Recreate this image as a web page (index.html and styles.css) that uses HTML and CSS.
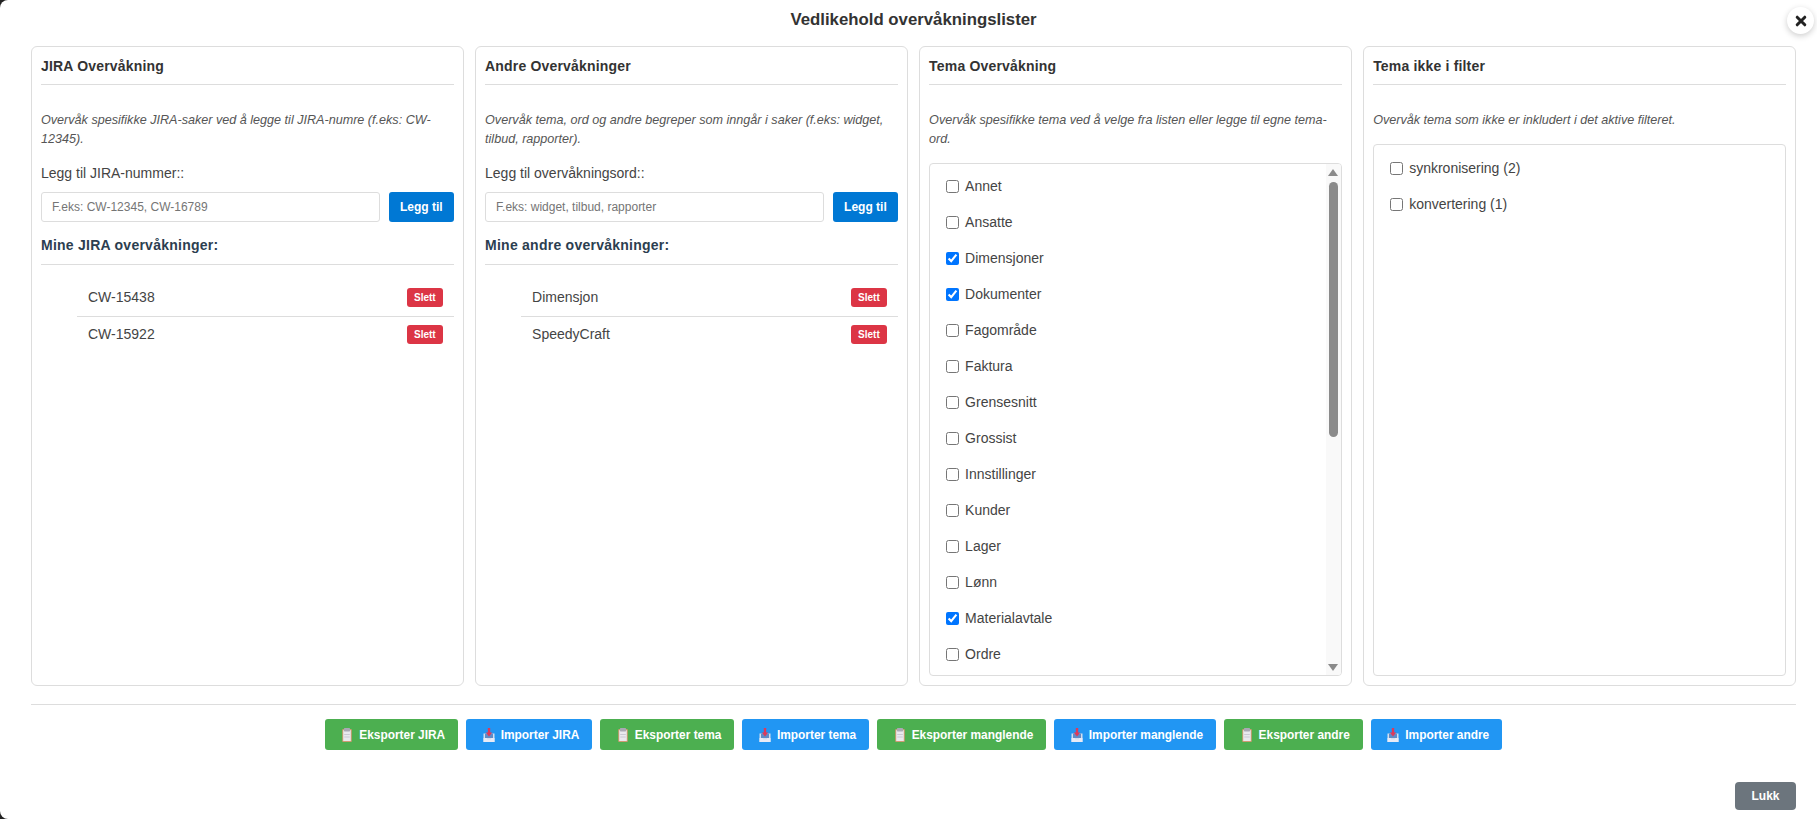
FILE: index.html
```html
<!DOCTYPE html>
<html lang="no">
<head>
<meta charset="utf-8">
<title>Vedlikehold overvåkningslister</title>
<link rel="stylesheet" href="styles.css">
</head>
<body>
<div class="dialog">
  <button class="close" aria-label="Lukk">
    <svg viewBox="0 0 14 14" width="14" height="14"><path d="M3.2 3.2 L10.8 10.8 M10.8 3.2 L3.2 10.8" stroke="#222" stroke-width="3" stroke-linecap="round" fill="none"/></svg>
  </button>
  <h1 class="title">Vedlikehold overvåkningslister</h1>
  <div class="panels">
    <section class="panel">
      <h2 class="panel-title">JIRA Overvåkning</h2>
      <p class="desc">Overvåk spesifikke JIRA-saker ved å legge til JIRA-numre (f.eks: CW-12345).</p>
      <label class="add-label">Legg til JIRA-nummer::</label>
      <div class="add-row">
        <input class="add-input" type="text" placeholder="F.eks: CW-12345, CW-16789">
        <button class="add-btn">Legg til</button>
      </div>
      <h3 class="sub-title">Mine JIRA overvåkninger:</h3>
      <ul class="watch-list">
        <li class="watch-row"><span>CW-15438</span><button class="del-btn">Slett</button></li>
        <li class="watch-row"><span>CW-15922</span><button class="del-btn">Slett</button></li>
      </ul>
    </section>
    <section class="panel">
      <h2 class="panel-title">Andre Overvåkninger</h2>
      <p class="desc">Overvåk tema, ord og andre begreper som inngår i saker (f.eks: widget, tilbud, rapporter).</p>
      <label class="add-label">Legg til overvåkningsord::</label>
      <div class="add-row">
        <input class="add-input" type="text" placeholder="F.eks: widget, tilbud, rapporter">
        <button class="add-btn">Legg til</button>
      </div>
      <h3 class="sub-title">Mine andre overvåkninger:</h3>
      <ul class="watch-list">
        <li class="watch-row"><span>Dimensjon</span><button class="del-btn">Slett</button></li>
        <li class="watch-row"><span>SpeedyCraft</span><button class="del-btn">Slett</button></li>
      </ul>
    </section>
    <section class="panel">
      <h2 class="panel-title">Tema Overvåkning</h2>
      <p class="desc">Overvåk spesifikke tema ved å velge fra listen eller legge til egne tema-ord.</p>
      <div class="check-box">
        <div class="check-list">
          <label class="check-row"><input type="checkbox">Annet</label>
          <label class="check-row"><input type="checkbox">Ansatte</label>
          <label class="check-row"><input type="checkbox" checked>Dimensjoner</label>
          <label class="check-row"><input type="checkbox" checked>Dokumenter</label>
          <label class="check-row"><input type="checkbox">Fagområde</label>
          <label class="check-row"><input type="checkbox">Faktura</label>
          <label class="check-row"><input type="checkbox">Grensesnitt</label>
          <label class="check-row"><input type="checkbox">Grossist</label>
          <label class="check-row"><input type="checkbox">Innstillinger</label>
          <label class="check-row"><input type="checkbox">Kunder</label>
          <label class="check-row"><input type="checkbox">Lager</label>
          <label class="check-row"><input type="checkbox">Lønn</label>
          <label class="check-row"><input type="checkbox" checked>Materialavtale</label>
          <label class="check-row"><input type="checkbox">Ordre</label>
        </div>
        <div class="scrollbar">
          <span class="arrow-up"></span>
          <span class="thumb"></span>
          <span class="arrow-down"></span>
        </div>
      </div>
    </section>
    <section class="panel">
      <h2 class="panel-title">Tema ikke i filter</h2>
      <p class="desc">Overvåk tema som ikke er inkludert i det aktive filteret.</p>
      <div class="check-box">
        <div class="check-list short">
          <label class="check-row"><input type="checkbox">synkronisering (2)</label>
          <label class="check-row"><input type="checkbox">konvertering (1)</label>
        </div>
      </div>
    </section>
  </div>
  <div class="io-bar">
    <button class="io-btn export"><svg class="ico" viewBox="0 0 14 16"><use href="#clip"/></svg>Eksporter JIRA</button>
    <button class="io-btn import"><svg class="ico" viewBox="0 0 14 16"><use href="#tray"/></svg>Importer JIRA</button>
    <button class="io-btn export"><svg class="ico" viewBox="0 0 14 16"><use href="#clip"/></svg>Eksporter tema</button>
    <button class="io-btn import"><svg class="ico" viewBox="0 0 14 16"><use href="#tray"/></svg>Importer tema</button>
    <button class="io-btn export"><svg class="ico" viewBox="0 0 14 16"><use href="#clip"/></svg>Eksporter manglende</button>
    <button class="io-btn import"><svg class="ico" viewBox="0 0 14 16"><use href="#tray"/></svg>Importer manglende</button>
    <button class="io-btn export"><svg class="ico" viewBox="0 0 14 16"><use href="#clip"/></svg>Eksporter andre</button>
    <button class="io-btn import"><svg class="ico" viewBox="0 0 14 16"><use href="#tray"/></svg>Importer andre</button>
  </div>
  <div class="foot"><button class="close-btn">Lukk</button></div>
</div>
<svg class="defs" width="0" height="0">
  <defs>
    <g id="clip">
      <rect x="2.2" y="2" width="9.6" height="13" rx="1" fill="#cf9a72"/>
      <rect x="3.2" y="3.2" width="7.6" height="10.8" fill="#e9e9ee"/>
      <rect x="4" y="1" width="6" height="3.4" rx=".6" fill="#a9a9b4"/>
      <rect x="4.2" y="7" width="5.6" height="1" fill="#cacad4"/>
      <rect x="4.2" y="9.5" width="5.6" height="1" fill="#cacad4"/>
    </g>
    <g id="tray">
      <path d="M1.5 6.5 H12.5 V15 H1.5 Z" fill="#d4deee"/>
      <path d="M3 6.5 H11 V11 H3 Z" fill="#5f8cc8"/>
      <path d="M1.5 11 H4.5 L5.5 12.5 H8.5 L9.5 11 H12.5 V15 H1.5 Z" fill="#e9ebf6"/>
      <path d="M5.8 1 H8.2 V5.5 H10.2 L7 9.6 L3.8 5.5 H5.8 Z" fill="#dc3a5a"/>
    </g>
  </defs>
</svg>
</body>
</html>
```

FILE: styles.css
```css
* { box-sizing: border-box; }
html, body { margin: 0; height: 100%; }
body {
  background: #222;
  font-family: "Liberation Sans", Arial, sans-serif;
  color: #333;
  overflow: hidden;
}
button { font-family: inherit; cursor: pointer; }
.defs { position: absolute; }
.dialog {
  position: relative;
  height: 819px;
  background: #fff;
  border-radius: 8px 0 0 8px;
  padding: 0 21px 9px 31px;
  display: flex;
  flex-direction: column;
}
.close {
  position: absolute;
  top: 7px;
  right: 3px;
  width: 27px;
  height: 27px;
  border: 0;
  padding: 0;
  border-radius: 50%;
  background: #fff;
  box-shadow: 0 2px 6px rgba(0, 0, 0, .2);
  display: flex;
  align-items: center;
  justify-content: center;
}
.title {
  margin: 0;
  height: 46px;
  padding-top: 10px;
  font-size: 16.8px;
  line-height: 20px;
  font-weight: 700;
  text-align: center;
  color: #333;
}
.panels {
  display: grid;
  grid-template-columns: repeat(4, 1fr);
  gap: 11.2px;
  height: 640px;
}
.panel {
  display: flex;
  flex-direction: column;
  min-width: 0;
  border: 1px solid #ddd;
  border-radius: 6px;
  padding: 9px 9px;
}
.panel-title {
  margin: 0;
  padding: 2px 0 10px;
  font-size: 14px;
  line-height: 16px;
  font-weight: 700;
  letter-spacing: .18px;
  color: #333;
  border-bottom: 1px solid #ddd;
}
.desc {
  margin: 26px 0 0;
  font-size: 12.6px;
  line-height: 18.9px;
  font-style: italic;
  color: #555;
}
.add-label {
  margin-top: 16px;
  font-size: 14px;
  line-height: 16px;
  color: #444;
}
.add-row {
  display: flex;
  gap: 9px;
  margin-top: 11px;
}
.add-input {
  flex: 1;
  min-width: 0;
  height: 30px;
  padding: 0 10px;
  font: 12px "Liberation Sans", Arial, sans-serif;
  border: 1px solid #ddd;
  border-radius: 3px;
  background: #fff;
}
.add-input::placeholder { color: #757575; opacity: 1; }
.add-btn {
  width: 65px;
  height: 30px;
  padding: 0;
  border: 0;
  border-radius: 3px;
  background: #0078d4;
  color: #fff;
  font-size: 12px;
  font-weight: 700;
}
.sub-title {
  margin: 15px 0 0;
  padding-bottom: 11px;
  font-size: 14px;
  line-height: 16px;
  font-weight: 700;
  letter-spacing: .25px;
  color: #2c3e50;
  border-bottom: 1px solid #ddd;
}
.watch-list {
  list-style: none;
  margin: 15px 0 0;
  padding: 0 0 0 36px;
}
.watch-row {
  display: flex;
  align-items: center;
  justify-content: space-between;
  padding: 8px 11px 9px;
  font-size: 14px;
  line-height: 19px;
  color: #444;
  border-bottom: 1px solid #ddd;
}
.watch-row:last-child { border-bottom: 0; }
.del-btn {
  width: 36px;
  height: 19px;
  padding: 0;
  border: 0;
  border-radius: 3px;
  background: #dc3545;
  color: #fff;
  font-size: 10px;
  font-weight: 700;
}
.check-box {
  flex: 1;
  min-height: 0;
  display: flex;
  margin-top: 14px;
  border: 1px solid #ddd;
  border-radius: 4px;
  overflow: hidden;
}
.check-list {
  flex: 1;
  min-width: 0;
  padding: 4.5px 16px 0;
  overflow: hidden;
}
.check-list.short { padding-top: 5.5px; }
.check-row {
  display: flex;
  align-items: center;
  gap: 6px;
  height: 36px;
  font-size: 14px;
  color: #444;
}
.check-row input {
  width: 13px;
  height: 13px;
  margin: 0;
  flex: none;
}
.scrollbar {
  flex: none;
  width: 15px;
  background: #f9f9f9;
  display: flex;
  flex-direction: column;
  align-items: center;
  padding: 5px 0 4px;
}
.arrow-up, .arrow-down {
  width: 0;
  height: 0;
  flex: none;
  border-left: 5px solid transparent;
  border-right: 5px solid transparent;
}
.arrow-up { border-bottom: 7px solid #8b8b8b; }
.arrow-down { border-top: 7px solid #8b8b8b; margin-top: auto; }
.thumb {
  flex: none;
  width: 9px;
  height: 255px;
  margin-top: 6px;
  border-radius: 5px;
  background: #8b8b8b;
}
.io-bar {
  margin-top: 18px;
  padding-top: 14px;
  border-top: 1px solid #ddd;
  display: flex;
  justify-content: center;
  gap: 8px;
}
.io-btn {
  display: flex;
  align-items: center;
  height: 31px;
  padding: 0 13px 0 15.5px;
  border: 0;
  border-radius: 3px;
  color: #fff;
  font-size: 11.9px;
  font-weight: 700;
  white-space: nowrap;
}
.export { background: #4caf50; }
.import { background: #2196f3; }
.ico {
  flex: none;
  width: 14px;
  height: 16px;
  margin-right: 5px;
}
.foot {
  margin-top: auto;
  display: flex;
  justify-content: flex-end;
}
.close-btn {
  width: 61px;
  height: 28px;
  padding: 0;
  border: 0;
  border-radius: 4px;
  background: #6c757d;
  color: #fff;
  font-size: 12px;
  font-weight: 700;
}
```
